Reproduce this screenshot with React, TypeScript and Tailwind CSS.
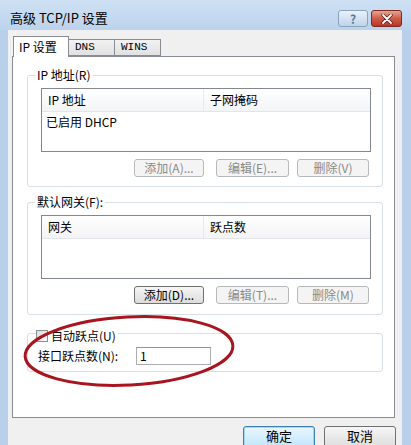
const cjk = { fontFamily: '"Noto Sans CJK SC", "Liberation Sans", sans-serif' };

const Btn = ({ label, w, on, extra = "" }: { label: string; w: number; on?: boolean; extra?: string }) => (
  <div
    style={{ width: w }}
    className={`h-[18px] flex items-center justify-center rounded-[3px] border text-[12px] leading-none ${
      on
        ? "border-[#707070] bg-linear-to-b from-[#f6f6f6] to-[#dcdcdc] text-black"
        : "border-[#b5b9bc] bg-[#f4f4f4] text-[#8a8a8a]"
    } ${extra}`}
  >
    {label}
  </div>
);

const ListView = ({ col1, col2, row }: { col1: string; col2: string; row?: string }) => (
  <div className="ml-[13px] w-[330px] h-[64px] border border-[#828790] bg-white">
    <div className="flex h-[23px] items-center border-b border-[#e3e5e8] bg-linear-to-b from-white to-[#f3f4f6] text-[12px]">
      <div className="w-[162px] pl-[6px] border-r border-[#e8e9eb] h-full flex items-center">{col1}</div>
      <div className="pl-[6px]">{col2}</div>
    </div>
    {row && <div className="h-[20px] flex items-center pl-[4px] text-[12px]">{row}</div>}
  </div>
);

export default function App() {
  return (
    <div style={cjk} className="relative w-[411px] h-[445px] overflow-hidden bg-[#b8d0ea] flex flex-col text-black">
      {/* title bar */}
      <div className="h-[30px] shrink-0 flex items-start bg-linear-to-b from-[#cfe1f4] to-[#bcd3ec]">
        <div className="pl-[10px] pt-[9px] text-[13px] leading-[18px]">高级 TCP/IP 设置</div>
        <div className="ml-auto mt-[10px] mr-[9px] flex gap-[3px]">
          <div className="w-[30px] h-[17px] rounded-[3px] border border-[#8aa3bd] bg-linear-to-b from-[#eaf2fa] to-[#bfd3e8] flex items-center justify-center text-[12px] font-bold text-[#5d7893] leading-none">
            ?
          </div>
          <div className="w-[31px] h-[17px] rounded-[3px] border border-[#7a2a22] bg-linear-to-b from-[#e6a393] via-[#cf5a47] to-[#b8362a] flex items-center justify-center">
            <svg width="12" height="10" viewBox="0 0 12 10">
              <path d="M2 1 L10 9 M10 1 L2 9" stroke="#4a1a14" strokeWidth="3.2" strokeLinecap="round" />
              <path d="M2 1 L10 9 M10 1 L2 9" stroke="#ffffff" strokeWidth="1.8" strokeLinecap="round" />
            </svg>
          </div>
        </div>
      </div>

      {/* body */}
      <div className="ml-[8px] mr-[9px] flex-1 bg-[#f0f0f0] flex flex-col pt-[6px]">
        {/* tabs */}
        <div className="flex items-end ml-[5px] h-[20px] relative z-10">
          <div className="w-[56px] h-[21px] -mb-px bg-white border border-b-0 border-[#898c95] text-[12px] flex items-center pl-[5px]">
            IP 设置
          </div>
          <div className="w-[46px] h-[17px] bg-linear-to-b from-[#f2f2f2] to-[#e1e1e1] border border-l-0 border-[#898c95] text-[11px] flex items-center pl-[6px] font-mono">
            DNS
          </div>
          <div className="w-[46px] h-[17px] bg-linear-to-b from-[#f2f2f2] to-[#e1e1e1] border border-l-0 border-[#898c95] text-[11px] flex items-center pl-[6px] font-mono">
            WINS
          </div>
        </div>

        {/* panel */}
        <div className="ml-[4px] mr-[7px] h-[362px] bg-white border border-[#898c95] pt-[10px]">
          <fieldset className="ml-[14px] mr-[11px] border border-[#d5dfe5] rounded-[3px] pb-[9px]">
            <legend className="ml-[7px] px-[2px] text-[12px] leading-[16px]">IP 地址(R)</legend>
            <div className="pt-[5px]">
              <ListView col1="IP 地址" col2="子网掩码" row="已启用 DHCP" />
              <div className="flex mt-[7px] ml-[106px]">
                <Btn label="添加(A)..." w={70} />
                <Btn label="编辑(E)..." w={73} extra="ml-[12px]" />
                <Btn label="删除(V)" w={72} extra="ml-[8px]" />
              </div>
            </div>
          </fieldset>

          <fieldset className="mt-[7px] ml-[14px] mr-[11px] border border-[#d5dfe5] rounded-[3px] pb-[10px]">
            <legend className="ml-[7px] px-[2px] text-[12px] leading-[16px]">默认网关(F):</legend>
            <div className="pt-[5px]">
              <ListView col1="网关" col2="跃点数" />
              <div className="flex mt-[7px] ml-[106px]">
                <Btn label="添加(D)..." w={70} on />
                <Btn label="编辑(T)..." w={73} extra="ml-[12px]" />
                <Btn label="删除(M)" w={72} extra="ml-[8px]" />
              </div>
            </div>
          </fieldset>

          <fieldset className="mt-[7px] ml-[14px] mr-[11px] border border-[#d5dfe5] rounded-[3px] pb-[6px]">
            <legend className="ml-[8px] pr-[2px] pt-[6px] text-[12px] leading-[16px]">
              <span className="flex items-center gap-[3px] bg-white">
                <span className="w-[12px] h-[12px] border border-[#8e8f8f] bg-linear-to-br from-[#dcdcdc] to-[#fbfbfb]" />
                自动跃点(U)
              </span>
            </legend>
            <div className="pt-[3px] flex items-center">
              <span className="ml-[10px] w-[98px] text-[12px]">接口跃点数(N):</span>
              <div className="w-[75px] h-[18px] border border-[#abadb3] border-t-[#8f949b] bg-white text-[12px] flex items-center pl-[3px]">
                1
              </div>
            </div>
          </fieldset>
        </div>

        {/* dialog buttons */}
        <div className="flex justify-end mt-[8px] mr-[6px] gap-[9px]">
          <div className="w-[72px] h-[23px] rounded-[3px] border border-[#3c7fb1] bg-linear-to-b from-[#eaf6fd] to-[#bee6fd] shadow-[inset_0_0_0_1px_#9fdaf8] flex justify-center pt-[1px] text-[13px] leading-[16px]">
            确定
          </div>
          <div className="w-[72px] h-[23px] rounded-[3px] border border-[#707070] bg-linear-to-b from-[#f6f6f6] to-[#dcdcdc] flex justify-center pt-[1px] text-[13px] leading-[16px]">
            取消
          </div>
        </div>
      </div>

      {/* red annotation ellipse */}
      <svg className="absolute left-[20px] top-[310px] pointer-events-none" width="222" height="84" viewBox="0 0 222 84">
        <ellipse cx="109" cy="41" rx="104" ry="34" transform="rotate(-3 109 41)" fill="none" stroke="#a8151f" strokeWidth="3" />
      </svg>
    </div>
  );
}
